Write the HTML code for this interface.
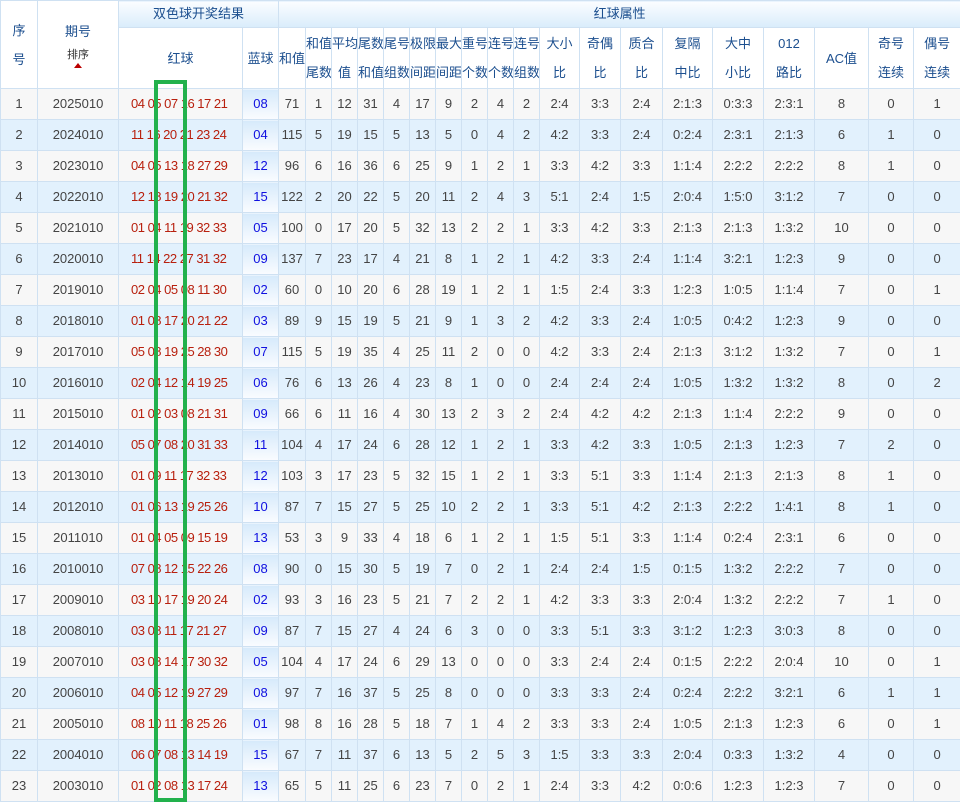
<!DOCTYPE html>
<html><head><meta charset="utf-8">
<style>
*{margin:0;padding:0;box-sizing:border-box}
body{width:960px;height:803px;overflow:hidden;background:#fff;font-family:"Liberation Sans","Noto Sans CJK SC",sans-serif;font-size:13px;color:#444;position:relative}
table{border-collapse:collapse;table-layout:fixed;width:960px}
td,th{border:1px solid #cfe1f2;text-align:center;vertical-align:middle;font-weight:normal;white-space:nowrap;overflow:hidden}
th{color:#1c4f8f;background:#fff;line-height:29px}
tr.h1 th{height:27px;line-height:18px;background:linear-gradient(#fbfdff,#d9ecfb)}
tr.h1 th[rowspan]{line-height:29px;background:#fff}
tr.h2 th{height:61px}
tbody tr{height:31px}
tbody td{height:31px;line-height:16px}
tbody tr:nth-child(odd) td{background:#f7f7f7}
tbody tr:nth-child(even) td{background:#e2f1fd}
td.r{color:#b8200e;text-align:left;padding-left:12px;letter-spacing:-0.5px}
tbody tr td.b{color:#1010e0;background:linear-gradient(#d6eafb,#fafcff)!important}
.s{font-size:11px;color:#333;line-height:14px;display:block;margin-top:6px}
.ar{display:block;width:0;height:0;margin:1px auto 0;border-left:4px solid transparent;border-right:4px solid transparent;border-bottom:5px solid #b00;line-height:0}
#g{position:absolute;left:154px;top:80px;width:33px;height:722px;border:4px solid #22b14c}
</style></head><body>
<table>
<colgroup><col style="width:37px"><col style="width:81px"><col style="width:124px"><col style="width:36px"><col style="width:27px"><col style="width:26px"><col style="width:26px"><col style="width:26px"><col style="width:26px"><col style="width:26px"><col style="width:26px"><col style="width:26px"><col style="width:26px"><col style="width:26px"><col style="width:40px"><col style="width:41px"><col style="width:42px"><col style="width:50px"><col style="width:51px"><col style="width:51px"><col style="width:54px"><col style="width:45px"><col style="width:47px"></colgroup>
<thead>
<tr class="h1"><th rowspan="2">序<br>号</th><th rowspan="2"><span style="display:block;line-height:20px">期号</span><span class="s">排序</span><span class="ar"></span></th><th colspan="2">双色球开奖结果</th><th colspan="19">红球属性</th></tr>
<tr class="h2"><th>红球</th><th>蓝球</th><th>和值</th><th>和值<br>尾数</th><th>平均<br>值</th><th>尾数<br>和值</th><th>尾号<br>组数</th><th>极限<br>间距</th><th>最大<br>间距</th><th>重号<br>个数</th><th>连号<br>个数</th><th>连号<br>组数</th><th>大小<br>比</th><th>奇偶<br>比</th><th>质合<br>比</th><th>复隔<br>中比</th><th>大中<br>小比</th><th>012<br>路比</th><th>AC值</th><th>奇号<br>连续</th><th>偶号<br>连续</th></tr>
</thead>
<tbody>
<tr><td>1</td><td>2025010</td><td class="r">04 05 07 16 17 21</td><td class="b">08</td><td>71</td><td>1</td><td>12</td><td>31</td><td>4</td><td>17</td><td>9</td><td>2</td><td>4</td><td>2</td><td>2:4</td><td>3:3</td><td>2:4</td><td>2:1:3</td><td>0:3:3</td><td>2:3:1</td><td>8</td><td>0</td><td>1</td></tr>
<tr><td>2</td><td>2024010</td><td class="r">11 16 20 21 23 24</td><td class="b">04</td><td>115</td><td>5</td><td>19</td><td>15</td><td>5</td><td>13</td><td>5</td><td>0</td><td>4</td><td>2</td><td>4:2</td><td>3:3</td><td>2:4</td><td>0:2:4</td><td>2:3:1</td><td>2:1:3</td><td>6</td><td>1</td><td>0</td></tr>
<tr><td>3</td><td>2023010</td><td class="r">04 05 13 18 27 29</td><td class="b">12</td><td>96</td><td>6</td><td>16</td><td>36</td><td>6</td><td>25</td><td>9</td><td>1</td><td>2</td><td>1</td><td>3:3</td><td>4:2</td><td>3:3</td><td>1:1:4</td><td>2:2:2</td><td>2:2:2</td><td>8</td><td>1</td><td>0</td></tr>
<tr><td>4</td><td>2022010</td><td class="r">12 18 19 20 21 32</td><td class="b">15</td><td>122</td><td>2</td><td>20</td><td>22</td><td>5</td><td>20</td><td>11</td><td>2</td><td>4</td><td>3</td><td>5:1</td><td>2:4</td><td>1:5</td><td>2:0:4</td><td>1:5:0</td><td>3:1:2</td><td>7</td><td>0</td><td>0</td></tr>
<tr><td>5</td><td>2021010</td><td class="r">01 04 11 19 32 33</td><td class="b">05</td><td>100</td><td>0</td><td>17</td><td>20</td><td>5</td><td>32</td><td>13</td><td>2</td><td>2</td><td>1</td><td>3:3</td><td>4:2</td><td>3:3</td><td>2:1:3</td><td>2:1:3</td><td>1:3:2</td><td>10</td><td>0</td><td>0</td></tr>
<tr><td>6</td><td>2020010</td><td class="r">11 14 22 27 31 32</td><td class="b">09</td><td>137</td><td>7</td><td>23</td><td>17</td><td>4</td><td>21</td><td>8</td><td>1</td><td>2</td><td>1</td><td>4:2</td><td>3:3</td><td>2:4</td><td>1:1:4</td><td>3:2:1</td><td>1:2:3</td><td>9</td><td>0</td><td>0</td></tr>
<tr><td>7</td><td>2019010</td><td class="r">02 04 05 08 11 30</td><td class="b">02</td><td>60</td><td>0</td><td>10</td><td>20</td><td>6</td><td>28</td><td>19</td><td>1</td><td>2</td><td>1</td><td>1:5</td><td>2:4</td><td>3:3</td><td>1:2:3</td><td>1:0:5</td><td>1:1:4</td><td>7</td><td>0</td><td>1</td></tr>
<tr><td>8</td><td>2018010</td><td class="r">01 08 17 20 21 22</td><td class="b">03</td><td>89</td><td>9</td><td>15</td><td>19</td><td>5</td><td>21</td><td>9</td><td>1</td><td>3</td><td>2</td><td>4:2</td><td>3:3</td><td>2:4</td><td>1:0:5</td><td>0:4:2</td><td>1:2:3</td><td>9</td><td>0</td><td>0</td></tr>
<tr><td>9</td><td>2017010</td><td class="r">05 08 19 25 28 30</td><td class="b">07</td><td>115</td><td>5</td><td>19</td><td>35</td><td>4</td><td>25</td><td>11</td><td>2</td><td>0</td><td>0</td><td>4:2</td><td>3:3</td><td>2:4</td><td>2:1:3</td><td>3:1:2</td><td>1:3:2</td><td>7</td><td>0</td><td>1</td></tr>
<tr><td>10</td><td>2016010</td><td class="r">02 04 12 14 19 25</td><td class="b">06</td><td>76</td><td>6</td><td>13</td><td>26</td><td>4</td><td>23</td><td>8</td><td>1</td><td>0</td><td>0</td><td>2:4</td><td>2:4</td><td>2:4</td><td>1:0:5</td><td>1:3:2</td><td>1:3:2</td><td>8</td><td>0</td><td>2</td></tr>
<tr><td>11</td><td>2015010</td><td class="r">01 02 03 08 21 31</td><td class="b">09</td><td>66</td><td>6</td><td>11</td><td>16</td><td>4</td><td>30</td><td>13</td><td>2</td><td>3</td><td>2</td><td>2:4</td><td>4:2</td><td>4:2</td><td>2:1:3</td><td>1:1:4</td><td>2:2:2</td><td>9</td><td>0</td><td>0</td></tr>
<tr><td>12</td><td>2014010</td><td class="r">05 07 08 20 31 33</td><td class="b">11</td><td>104</td><td>4</td><td>17</td><td>24</td><td>6</td><td>28</td><td>12</td><td>1</td><td>2</td><td>1</td><td>3:3</td><td>4:2</td><td>3:3</td><td>1:0:5</td><td>2:1:3</td><td>1:2:3</td><td>7</td><td>2</td><td>0</td></tr>
<tr><td>13</td><td>2013010</td><td class="r">01 09 11 17 32 33</td><td class="b">12</td><td>103</td><td>3</td><td>17</td><td>23</td><td>5</td><td>32</td><td>15</td><td>1</td><td>2</td><td>1</td><td>3:3</td><td>5:1</td><td>3:3</td><td>1:1:4</td><td>2:1:3</td><td>2:1:3</td><td>8</td><td>1</td><td>0</td></tr>
<tr><td>14</td><td>2012010</td><td class="r">01 06 13 19 25 26</td><td class="b">10</td><td>87</td><td>7</td><td>15</td><td>27</td><td>5</td><td>25</td><td>10</td><td>2</td><td>2</td><td>1</td><td>3:3</td><td>5:1</td><td>4:2</td><td>2:1:3</td><td>2:2:2</td><td>1:4:1</td><td>8</td><td>1</td><td>0</td></tr>
<tr><td>15</td><td>2011010</td><td class="r">01 04 05 09 15 19</td><td class="b">13</td><td>53</td><td>3</td><td>9</td><td>33</td><td>4</td><td>18</td><td>6</td><td>1</td><td>2</td><td>1</td><td>1:5</td><td>5:1</td><td>3:3</td><td>1:1:4</td><td>0:2:4</td><td>2:3:1</td><td>6</td><td>0</td><td>0</td></tr>
<tr><td>16</td><td>2010010</td><td class="r">07 08 12 15 22 26</td><td class="b">08</td><td>90</td><td>0</td><td>15</td><td>30</td><td>5</td><td>19</td><td>7</td><td>0</td><td>2</td><td>1</td><td>2:4</td><td>2:4</td><td>1:5</td><td>0:1:5</td><td>1:3:2</td><td>2:2:2</td><td>7</td><td>0</td><td>0</td></tr>
<tr><td>17</td><td>2009010</td><td class="r">03 10 17 19 20 24</td><td class="b">02</td><td>93</td><td>3</td><td>16</td><td>23</td><td>5</td><td>21</td><td>7</td><td>2</td><td>2</td><td>1</td><td>4:2</td><td>3:3</td><td>3:3</td><td>2:0:4</td><td>1:3:2</td><td>2:2:2</td><td>7</td><td>1</td><td>0</td></tr>
<tr><td>18</td><td>2008010</td><td class="r">03 08 11 17 21 27</td><td class="b">09</td><td>87</td><td>7</td><td>15</td><td>27</td><td>4</td><td>24</td><td>6</td><td>3</td><td>0</td><td>0</td><td>3:3</td><td>5:1</td><td>3:3</td><td>3:1:2</td><td>1:2:3</td><td>3:0:3</td><td>8</td><td>0</td><td>0</td></tr>
<tr><td>19</td><td>2007010</td><td class="r">03 08 14 17 30 32</td><td class="b">05</td><td>104</td><td>4</td><td>17</td><td>24</td><td>6</td><td>29</td><td>13</td><td>0</td><td>0</td><td>0</td><td>3:3</td><td>2:4</td><td>2:4</td><td>0:1:5</td><td>2:2:2</td><td>2:0:4</td><td>10</td><td>0</td><td>1</td></tr>
<tr><td>20</td><td>2006010</td><td class="r">04 05 12 19 27 29</td><td class="b">08</td><td>97</td><td>7</td><td>16</td><td>37</td><td>5</td><td>25</td><td>8</td><td>0</td><td>0</td><td>0</td><td>3:3</td><td>3:3</td><td>2:4</td><td>0:2:4</td><td>2:2:2</td><td>3:2:1</td><td>6</td><td>1</td><td>1</td></tr>
<tr><td>21</td><td>2005010</td><td class="r">08 10 11 18 25 26</td><td class="b">01</td><td>98</td><td>8</td><td>16</td><td>28</td><td>5</td><td>18</td><td>7</td><td>1</td><td>4</td><td>2</td><td>3:3</td><td>3:3</td><td>2:4</td><td>1:0:5</td><td>2:1:3</td><td>1:2:3</td><td>6</td><td>0</td><td>1</td></tr>
<tr><td>22</td><td>2004010</td><td class="r">06 07 08 13 14 19</td><td class="b">15</td><td>67</td><td>7</td><td>11</td><td>37</td><td>6</td><td>13</td><td>5</td><td>2</td><td>5</td><td>3</td><td>1:5</td><td>3:3</td><td>3:3</td><td>2:0:4</td><td>0:3:3</td><td>1:3:2</td><td>4</td><td>0</td><td>0</td></tr>
<tr><td>23</td><td>2003010</td><td class="r">01 02 08 13 17 24</td><td class="b">13</td><td>65</td><td>5</td><td>11</td><td>25</td><td>6</td><td>23</td><td>7</td><td>0</td><td>2</td><td>1</td><td>2:4</td><td>3:3</td><td>4:2</td><td>0:0:6</td><td>1:2:3</td><td>1:2:3</td><td>7</td><td>0</td><td>0</td></tr>
</tbody>
</table>
<div id="g"></div>
</body></html>
